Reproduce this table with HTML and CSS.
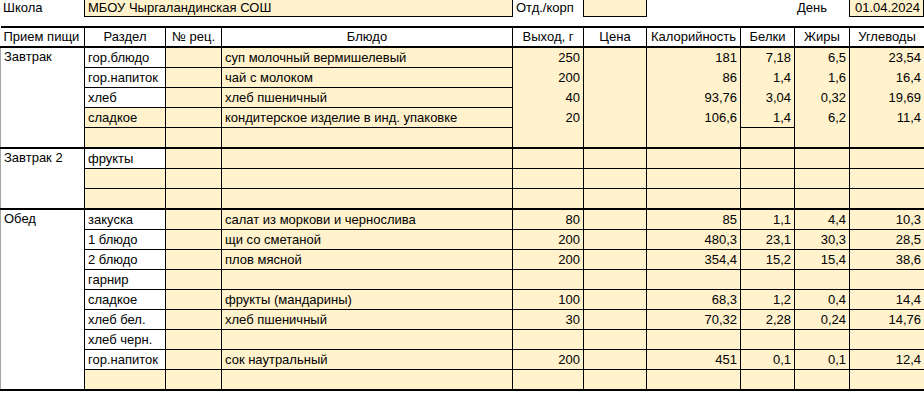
FILE: index.html
```html
<!DOCTYPE html>
<html lang="ru">
<head>
    <meta charset="UTF-8">
    <meta name="viewport" content="width=device-width, initial-scale=1.0">
    <title>Меню</title>
    <link rel="stylesheet" href="styles.css">
</head>
<body>

    <div class="info">
        <div class="lbl w-meal">Школа</div>
        <div class="field w-school">МБОУ Чыргаландинская СОШ</div>
        <div class="lbl w-out">Отд./корп</div>
        <div class="field w-price"></div>
        <div class="lbl w-gap"></div>
        <div class="lbl w-fat">День</div>
        <div class="field w-date">01.04.2024</div>
    </div>

    <table class="menu">
        <colgroup>
            <col class="c-meal">
            <col class="c-sect">
            <col class="c-rec">
            <col class="c-dish">
            <col class="c-out">
            <col class="c-price">
            <col class="c-kcal">
            <col class="c-prot">
            <col class="c-fat">
            <col class="c-carb">
        </colgroup>
        <tr class="head">
            <th class="left">Прием пищи</th>
            <th>Раздел</th>
            <th>№ рец.</th>
            <th>Блюдо</th>
            <th>Выход, г</th>
            <th>Цена</th>
            <th>Калорийность</th>
            <th>Белки</th>
            <th>Жиры</th>
            <th>Углеводы</th>
        </tr>

        <!-- завтрак -->
        <tr class="open">
            <td class="meal" rowspan="5">Завтрак</td>
            <td class="w">гор.блюдо</td><td></td><td>суп молочный вермишелевый</td>
            <td class="n o">250</td><td class="o"></td><td class="n o">181</td><td class="n o">7,18</td><td class="n o">6,5</td><td class="n o">23,54</td>
        </tr>
        <tr class="open">
            <td class="w">гор.напиток</td><td></td><td>чай с молоком</td>
            <td class="n o">200</td><td class="o"></td><td class="n o">86</td><td class="n o">1,4</td><td class="n o">1,6</td><td class="n o">16,4</td>
        </tr>
        <tr class="open">
            <td class="w">хлеб</td><td></td><td>хлеб пшеничный</td>
            <td class="n o">40</td><td class="o"></td><td class="n o">93,76</td><td class="n o">3,04</td><td class="n o">0,32</td><td class="n o">19,69</td>
        </tr>
        <tr class="open">
            <td>сладкое</td><td></td><td>кондитерское изделие в инд. упаковке</td>
            <td class="n o">20</td><td class="o"></td><td class="n o">106,6</td><td class="n">1,4</td><td class="n o">6,2</td><td class="n o">11,4</td>
        </tr>
        <tr class="end">
            <td></td><td></td><td></td><td></td><td></td><td></td><td></td><td></td><td></td>
        </tr>

        <!-- завтрак 2 -->
        <tr>
            <td class="meal" rowspan="3">Завтрак 2</td>
            <td class="w">фрукты</td><td></td><td></td><td></td><td></td><td></td><td></td><td></td><td></td>
        </tr>
        <tr>
            <td></td><td></td><td></td><td></td><td></td><td></td><td></td><td></td><td></td>
        </tr>
        <tr class="end">
            <td></td><td></td><td></td><td></td><td></td><td></td><td></td><td></td><td></td>
        </tr>

        <!-- обед -->
        <tr>
            <td class="meal" rowspan="9">Обед</td>
            <td class="w">закуска</td><td></td><td>салат из моркови и чернослива</td>
            <td class="n">80</td><td></td><td class="n">85</td><td class="n">1,1</td><td class="n">4,4</td><td class="n">10,3</td>
        </tr>
        <tr>
            <td class="w">1 блюдо</td><td></td><td>щи со сметаной</td>
            <td class="n">200</td><td></td><td class="n">480,3</td><td class="n">23,1</td><td class="n">30,3</td><td class="n">28,5</td>
        </tr>
        <tr>
            <td class="w">2 блюдо</td><td></td><td>плов мясной</td>
            <td class="n">200</td><td></td><td class="n">354,4</td><td class="n">15,2</td><td class="n">15,4</td><td class="n">38,6</td>
        </tr>
        <tr>
            <td class="w">гарнир</td><td></td><td></td><td></td><td></td><td></td><td></td><td></td><td></td>
        </tr>
        <tr>
            <td class="w">сладкое</td><td></td><td>фрукты (мандарины)</td>
            <td class="n">100</td><td></td><td class="n">68,3</td><td class="n">1,2</td><td class="n">0,4</td><td class="n">14,4</td>
        </tr>
        <tr>
            <td class="w">хлеб бел.</td><td></td><td>хлеб пшеничный</td>
            <td class="n">30</td><td></td><td class="n">70,32</td><td class="n">2,28</td><td class="n">0,24</td><td class="n">14,76</td>
        </tr>
        <tr>
            <td class="w">хлеб черн.</td><td></td><td></td><td></td><td></td><td></td><td></td><td></td><td></td>
        </tr>
        <tr>
            <td class="w">гор.напиток</td><td></td><td>сок наутральный</td>
            <td class="n">200</td><td></td><td class="n">451</td><td class="n">0,1</td><td class="n">0,1</td><td class="n">12,4</td>
        </tr>
        <tr class="end">
            <td></td><td></td><td></td><td></td><td></td><td></td><td></td><td></td><td></td>
        </tr>
    </table>

</body>
</html>
```

FILE: styles.css
```css
:root {
  --cell: #fff2cc;
  --line: #000;
}

* {
  box-sizing: border-box;
}

body {
  margin: 0;
  background: #fff;
  color: #000;
  font-family: "Liberation Sans", Arial, sans-serif;
  font-size: 13px;
}

/* строка с названием школы */
.info {
  display: flex;
  height: 17px;
}

.info > div {
  padding: 0 3px;
  line-height: 16px;
  white-space: nowrap;
}

.field {
  background: var(--cell);
  border: 1px solid var(--line);
  border-top: none;
}

.w-meal { width: 84px; }
.w-school { width: 429px; }
.w-out { width: 70px; }
.w-price { width: 64px; }
.w-gap { width: 147px; }
.w-fat { width: 55px; }
.w-date { width: 75px; text-align: right; }

/* таблица меню */
.menu {
  margin-top: 9px;
  width: 924px;
  border-collapse: collapse;
  table-layout: fixed;
}

.c-meal { width: 84px; }
.c-sect { width: 81px; }
.c-rec { width: 56px; }
.c-dish { width: 291px; }
.c-out { width: 71px; }
.c-price { width: 63px; }
.c-kcal { width: 94px; }
.c-prot { width: 54px; }
.c-fat { width: 55px; }
.c-carb { width: 75px; }

.menu tr {
  height: 20px;
}

.menu tr.end {
  height: 21px;
}

.menu th,
.menu td {
  padding: 0 3px 1px;
  border-right: 1px solid var(--line);
  border-bottom: 1px solid var(--line);
  vertical-align: bottom;
  line-height: 16px;
  white-space: nowrap;
  overflow: hidden;
  text-align: left;
  font-weight: normal;
}

.menu td {
  background: var(--cell);
}

.menu .head th {
  text-align: center;
  border-top: 2px solid var(--line);
  border-bottom: 2px solid var(--line);
}

.menu .head th.left {
  text-align: left;
}

.menu td.w {
  background: #fff;
}

.menu td.meal {
  background: #fff;
  vertical-align: top;
  padding-top: 1px;
  border-left: 1px solid #a6a6a6;
  border-bottom: 2px solid var(--line);
}

.menu td.n {
  text-align: right;
}

.menu .open td.o {
  border-bottom: none;
}

.menu .end td {
  border-bottom: 2px solid var(--line);
}
```
